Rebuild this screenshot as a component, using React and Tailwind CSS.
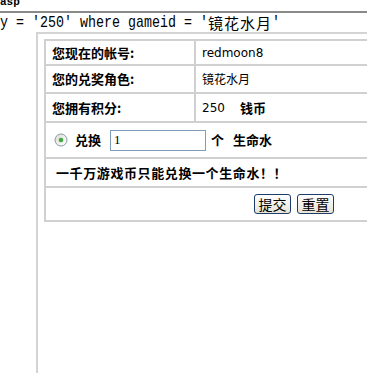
export default function App() {
  const cjk = { fontFamily: '"Noto Sans CJK SC", "DejaVu Sans", sans-serif' };
  const lbl = "font-bold text-[13px] text-black";
  const mono = { fontFamily: '"Liberation Mono", "Noto Sans CJK SC", monospace' };
  const lat = { fontFamily: '"DejaVu Sans", sans-serif' };
  return (
    <div className="w-[367px] h-[373px] overflow-hidden bg-white relative">
      <div className="h-[11px] overflow-hidden">
        <div className="text-[11px] leading-[11px] -mt-[3px] font-bold text-black" style={mono}>asp</div>
      </div>
      <div className="h-[2px] bg-[#8a8a8a] w-[600px]" />
      <div className="h-[19px] text-[13.33px] leading-[19px] text-black whitespace-nowrap flex items-center" style={mono}>
        <span className="inline-block scale-y-[1.2] whitespace-pre">y = '250' where gameid = '</span>
        <span className="inline-block text-[15px] w-[64px] tracking-[1px]" style={cjk}>镜花水月</span>
        <span className="inline-block scale-y-[1.2]">'</span>
      </div>
      <div className="ml-[36px] w-[600px] h-[400px] border-l-2 border-t-2 border-[#d4d4d4] pt-[5px] pl-[6px]">
        <div className="w-[500px] border-2 border-[#d0d0d0] flex flex-col divide-y-2 divide-[#d0d0d0]" style={cjk}>
          <div className="h-[25px] flex divide-x-2 divide-[#d0d0d0]">
            <div className={"w-[150px] flex items-center pl-[6px] " + lbl}>您现在的帐号:</div>
            <div className="flex-1 flex items-center pl-[6px] text-[12px] text-black" style={lat}>redmoon8</div>
          </div>
          <div className="h-[28px] flex divide-x-2 divide-[#d0d0d0]">
            <div className={"w-[150px] flex items-center pl-[6px] " + lbl}>您的兑奖角色:</div>
            <div className="flex-1 flex items-center pl-[6px] text-[12px] text-black">镜花水月</div>
          </div>
          <div className="h-[29px] flex divide-x-2 divide-[#d0d0d0]">
            <div className={"w-[150px] flex items-center pl-[6px] " + lbl}>您拥有积分:</div>
            <div className="flex-1 flex items-center pl-[6px] text-black">
              <span className="text-[12px] w-[38px]" style={lat}>250</span>
              <span className="text-[13px] font-bold">钱币</span>
            </div>
          </div>
          <div className="h-[36px] flex items-center pl-[8px] text-black">
            <svg width="14" height="14" viewBox="0 0 14 14" className="mr-[7px]">
              <defs>
                <linearGradient id="rg" x1="0" y1="0" x2="1" y2="1">
                  <stop offset="0" stopColor="#dcdcd4" />
                  <stop offset="1" stopColor="#ffffff" />
                </linearGradient>
              </defs>
              <circle cx="7" cy="7" r="6" fill="url(#rg)" stroke="#8a9aa8" strokeWidth="1" />
              <circle cx="7" cy="7" r="2.3" fill="#3fa83f" />
            </svg>
            <span className="text-[13px] font-bold">兑换</span>
            <div className="ml-[9px] w-[96px] h-[21px] border border-[#7f9db9] bg-white flex items-center pl-[3px] text-[13px]" style={{ fontFamily: '"Liberation Serif", serif' }}>1</div>
            <span className="ml-[5px] text-[13px] font-bold">个</span>
            <span className="ml-[9px] text-[13px] font-bold">生命水</span>
          </div>
          <div className="h-[29px] flex items-center pl-[10px] text-[13px] font-bold text-black tracking-[0.6px]">
            一千万游戏币只能兑换一个生命水！！
          </div>
          <div className="h-[32px] flex items-center justify-center gap-[6px]">
            <button className="w-[37px] h-[20px] rounded-[3px] border border-[#1c3c6c] bg-gradient-to-b from-white to-[#e6e3d6] text-[14px] leading-[18px] text-black" style={cjk}>提交</button>
            <button className="w-[37px] h-[20px] rounded-[3px] border border-[#1c3c6c] bg-gradient-to-b from-white to-[#e6e3d6] text-[14px] leading-[18px] text-black" style={cjk}>重置</button>
          </div>
        </div>
      </div>
    </div>
  );
}
